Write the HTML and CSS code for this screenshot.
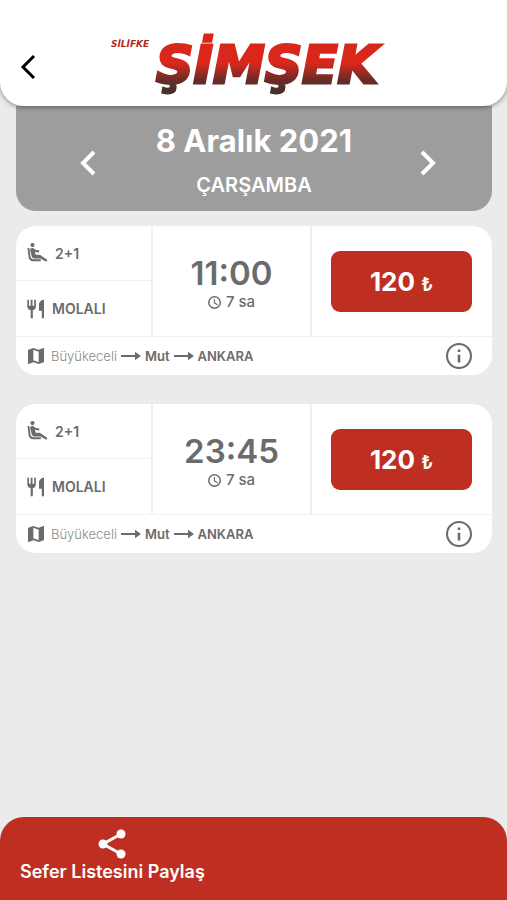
FILE: index.html
```html
<!DOCTYPE html>
<html lang="tr">
<head>
<meta charset="utf-8">
<meta name="viewport" content="width=device-width, initial-scale=1">
<title>Silifke Şimşek – Seferler</title>
<link rel="stylesheet" href="styles.css">
</head>
<body>
<svg class="sprite" aria-hidden="true">
  <symbol id="seat" viewBox="0 0 24 24"><circle cx="6" cy="2.500" r="2.500"/><path d="M0 6h2.200l1.300 10a4 4 0 0 0 4 3.500H16V22H7a6 6 0 0 1-5.700-5.500z"/><path d="M3.500 7C4.500 5.700 6.500 5.700 7.500 6.500c2 1.700 4.200 2.500 6.500 2.300v2.600c-1.800.1-3.500-.3-5-1.100l.8 3.700H14c1 0 1.900.5 2.500 1.200L24 20.500 22.200 22.500l-6.500-4H8c-1.500 0-2.700-1.100-3-2.500L3.300 9c-.1-.8-.2-1.500.2-2z"/></symbol>
  <symbol id="fork" viewBox="0 0 22 24"><path d="M0 1h2v7h2V1h2.200v7h2V1h2v8c0 2.300-1.500 4-3.600 4.300V23H4V13.300C1.600 13 0 11.300 0 9zM20 1v22h-2.600v-9H14V7c0-3.500 2.800-6 6-6z"/></symbol>
  <symbol id="map" viewBox="3 3 18 18"><path d="M20.500 3l-.16.030L15 5.100 9 3 3.360 4.900c-.21.070-.36.250-.36.480V20.500c0 .28.220.5.500.5l.16-.030L9 18.900l6 2.100 5.640-1.900c.21-.070.36-.250.360-.480V3.500c0-.28-.220-.5-.5-.5zM15 19l-6-2.110V5l6 2.110V19z"/></symbol>
  <symbol id="arrow" viewBox="0 0 20 10"><path d="M0 4h14V.8L20 5l-6 4.200V6H0z"/></symbol>
  <symbol id="clock" viewBox="2 2 20 20"><path d="M12 2a10 10 0 1 0 0 20 10 10 0 0 0 0-20zm0 17.700a7.700 7.700 0 1 1 0-15.400 7.700 7.700 0 0 1 0 15.400zm.8-12.700H11v6l5.250 3.150.9-1.430-4.350-2.570z"/></symbol>
  <symbol id="info" viewBox="2 2 20 20"><path d="M11 7h2v2h-2zm0 4h2v6h-2zm1-9a10 10 0 1 0 0 20 10 10 0 0 0 0-20zm0 18.400a8.400 8.400 0 1 1 0-16.800 8.400 8.400 0 0 1 0 16.800z"/></symbol>
  <symbol id="prev" viewBox="0 0 16 26"><path d="M14 2 3 13l11 11" fill="none" stroke="currentColor"/></symbol>
  <symbol id="next" viewBox="0 0 16 26"><path d="m2 2 11 11L2 24" fill="none" stroke="currentColor"/></symbol>
  <symbol id="share" viewBox="0 0 28 30"><path d="M23 5 5 15l18 10" fill="none" stroke="currentColor" stroke-width="3"/><circle cx="23" cy="5" r="4.500"/><circle cx="5" cy="15" r="4.500"/><circle cx="23" cy="25" r="4.500"/></symbol>
</svg>

<header class="header">
  <button class="icon-button back" aria-label="Geri"><svg><use href="#prev"/></svg></button>
  <svg class="logo" viewBox="0 0 290 62" role="img" aria-label="Silifke Şimşek">
    <defs>
      <linearGradient id="brand" gradientUnits="userSpaceOnUse" x1="0" y1="8" x2="0" y2="56">
        <stop offset="0" stop-color="#d9281b"/><stop offset=".4" stop-color="#d9281b"/>
        <stop offset=".75" stop-color="#6b2b28"/><stop offset="1" stop-color="#43302f"/>
      </linearGradient>
    </defs>
    <text class="logo-name" x="158" y="47" text-anchor="middle">ŞİMŞEK</text>
    <text class="logo-town" x="2" y="11">SİLİFKE</text>
  </svg>
</header>

<main class="content">
  <section class="date-bar">
    <button class="icon-button day" aria-label="Önceki gün"><svg><use href="#prev"/></svg></button>
    <div class="date">
      <h1>8 Aralık 2021</h1>
      <p>ÇARŞAMBA</p>
    </div>
    <button class="icon-button day" aria-label="Sonraki gün"><svg><use href="#next"/></svg></button>
  </section>

  <article class="trip">
    <div class="trip-main">
      <div class="features">
        <div class="feature seats"><svg><use href="#seat"/></svg>2+1</div>
        <div class="feature"><svg><use href="#fork"/></svg>MOLALI</div>
      </div>
      <div class="times">
        <time class="departure">11:00</time>
        <div class="duration"><svg><use href="#clock"/></svg>7 sa</div>
      </div>
      <div class="price"><button class="buy">120 <span>₺</span></button></div>
    </div>
    <div class="route">
      <svg class="map"><use href="#map"/></svg>
      <span class="origin">Büyükeceli</span>
      <svg class="arrow"><use href="#arrow"/></svg>
      <span>Mut</span>
      <svg class="arrow"><use href="#arrow"/></svg>
      <span>ANKARA</span>
      <button class="icon-button info" aria-label="Sefer bilgisi"><svg><use href="#info"/></svg></button>
    </div>
  </article>

  <article class="trip">
    <div class="trip-main">
      <div class="features">
        <div class="feature seats"><svg><use href="#seat"/></svg>2+1</div>
        <div class="feature"><svg><use href="#fork"/></svg>MOLALI</div>
      </div>
      <div class="times">
        <time class="departure">23:45</time>
        <div class="duration"><svg><use href="#clock"/></svg>7 sa</div>
      </div>
      <div class="price"><button class="buy">120 <span>₺</span></button></div>
    </div>
    <div class="route">
      <svg class="map"><use href="#map"/></svg>
      <span class="origin">Büyükeceli</span>
      <svg class="arrow"><use href="#arrow"/></svg>
      <span>Mut</span>
      <svg class="arrow"><use href="#arrow"/></svg>
      <span>ANKARA</span>
      <button class="icon-button info" aria-label="Sefer bilgisi"><svg><use href="#info"/></svg></button>
    </div>
  </article>
</main>

<footer class="footer">
  <button class="share"><svg><use href="#share"/></svg>Sefer Listesini Paylaş</button>
</footer>
</body>
</html>
```
FILE: styles.css
```css
* {
  box-sizing: border-box;
}

body {
  margin: 0;
  min-height: 100vh;
  display: flex;
  flex-direction: column;
  background: #ebebeb;
  color: #6b6b6b;
  font-family: Inter, "Liberation Sans", sans-serif;
}

h1,
p {
  margin: 0;
}

button {
  padding: 0;
  border: 0;
  background: none;
  color: inherit;
  font: inherit;
  cursor: pointer;
}

svg {
  display: block;
  flex: none;
  fill: currentColor;
}

.sprite {
  position: absolute;
  width: 0;
  height: 0;
}

.icon-button {
  display: flex;
  align-items: center;
  justify-content: center;
}

.header {
  position: relative;
  z-index: 1;
  display: grid;
  grid-template-columns: 56px 1fr 56px;
  align-items: center;
  padding: 36px 0 8px;
  background: #fff;
  border-radius: 0 0 24px 24px;
  box-shadow: 0 1px 5px rgb(0 0 0 / 45%);
}

.back {
  height: 60px;
  color: #000;
  stroke-width: 3;
}

.back svg {
  width: 16px;
  height: 26px;
}

.logo {
  justify-self: center;
  width: 290px;
  height: 62px;
  overflow: visible;
}

.logo-name,
.logo-town {
  font-family: "DejaVu Sans", sans-serif;
  font-weight: 700;
  font-style: italic;
}

.logo-name {
  font-size: 52px;
  fill: url(#brand);
  stroke: url(#brand);
  stroke-width: 3;
}

.logo-town {
  font-size: 9px;
  fill: #b02a22;
}

.content {
  padding: 0 15px 24px 16px;
}

.date-bar {
  display: grid;
  grid-template-columns: 48px 1fr 48px;
  align-items: center;
  height: 105px;
  padding: 0 40px 0 48px;
  background: #9d9d9d;
  border-radius: 0 0 20px 20px;
  color: #fff;
  text-align: center;
}

.day {
  height: 48px;
  margin-top: 8px;
  stroke-width: 4;
}

.day svg {
  width: 16px;
  height: 26px;
}

.date {
  padding: 4px 8px 0 0;
}

.date h1 {
  font-size: 31px;
  font-weight: 700;
  line-height: 40px;
}

.date p {
  margin-top: 8px;
  font-size: 20px;
  font-weight: 600;
  line-height: 32px;
}

.trip {
  margin-top: 15px;
  background: #fff;
  border-radius: 20px;
}

.trip + .trip {
  margin-top: 29px;
}

.trip-main {
  display: grid;
  grid-template-columns: 137fr 159fr 180fr;
  height: 111px;
  border-bottom: 1px solid #f0f0f0;
}

.features {
  display: grid;
  grid-template-rows: 1fr 1fr;
  border-right: 2px solid #f0f0f0;
}

.feature {
  display: flex;
  align-items: center;
  gap: 6px;
  padding-left: 11px;
  font-size: 14px;
  font-weight: 600;
}

.feature svg {
  width: 19px;
  height: 20px;
}

.seats {
  gap: 7px;
  border-bottom: 1px solid #f0f0f0;
}

.seats svg {
  width: 21px;
}

.times {
  display: flex;
  flex-direction: column;
  align-items: center;
  justify-content: center;
  padding-top: 2px;
  border-right: 2px solid #f0f0f0;
}

.departure {
  font-size: 33px;
  font-weight: 600;
  line-height: 40px;
}

.duration {
  display: flex;
  align-items: center;
  gap: 5px;
  font-size: 15px;
  font-weight: 500;
  line-height: 18px;
}

.duration svg {
  width: 13px;
  height: 13px;
}

.price {
  display: flex;
  align-items: center;
  padding: 0 20px 0 19px;
}

.buy {
  width: 100%;
  height: 61px;
  border-radius: 9px;
  background: #be2f22;
  color: #fff;
  font-size: 26px;
  font-weight: 700;
}

.buy span {
  font-size: 19px;
  font-weight: 600;
}

.route {
  display: flex;
  align-items: center;
  gap: 4px;
  height: 38px;
  padding: 0 20px 0 12px;
  font-size: 13px;
  font-weight: 600;
}

.map {
  width: 16px;
  height: 16px;
  margin-right: 3px;
}

.origin {
  color: #8a8a8a;
  font-weight: 300;
}

.arrow {
  width: 20px;
  height: 10px;
}

.info {
  margin-left: auto;
}

.info svg {
  width: 26px;
  height: 26px;
}

.footer {
  margin-top: auto;
  padding: 12px 20px 16px;
  background: #be2f22;
  border-radius: 24px 24px 0 0;
  color: #fff;
}

.share {
  display: flex;
  flex-direction: column;
  align-items: center;
  gap: 1px;
  font-size: 18px;
  font-weight: 600;
  line-height: 24px;
}

.share svg {
  width: 28px;
  height: 30px;
}
```
